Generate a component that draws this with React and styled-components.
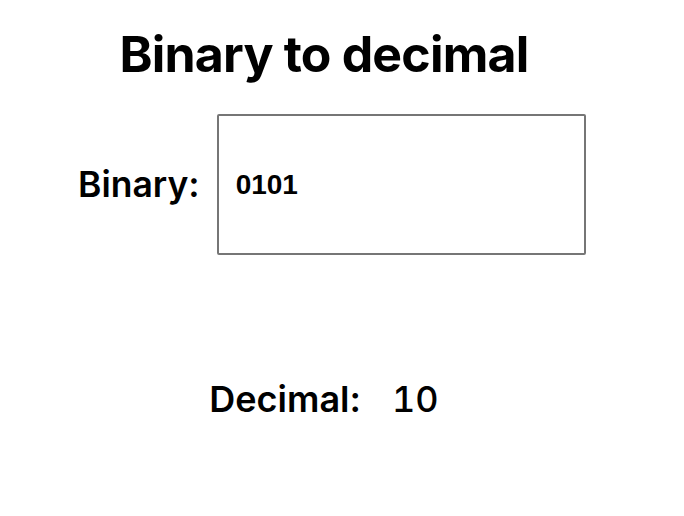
import styled, { createGlobalStyle } from "styled-components";
import { useState } from "react";

const GlobalStyle = createGlobalStyle`
  body {
    margin: 8px;
    background: #ffffff;
    color: #000000;
    font-family: Inter, "Liberation Sans", sans-serif;
  }
`;

const Page = styled.main`
  width: 632px;
  display: flex;
  flex-direction: column;
`;

const Title = styled.h1`
  margin: 16px 0 0;
  font-size: 50px;
  line-height: 1.2;
  font-weight: 700;
  letter-spacing: -0.8px;
  text-align: center;
`;

const BinaryRow = styled.div`
  display: flex;
  align-items: center;
  gap: 17px;
  margin: 30px 0 0 70px;
`;

const Label = styled.label`
  font-size: 35.5px;
  font-weight: 600;
`;

const BinaryInput = styled.input`
  box-sizing: border-box;
  width: 369px;
  height: 141px;
  padding: 0 17px;
  border: 2px solid #767676;
  border-radius: 2px;
  font-family: "Liberation Sans", Arial, sans-serif;
  font-size: 28px;
  font-weight: 700;
  color: #000;
  outline: none;
`;

const DecimalRow = styled.div`
  display: flex;
  justify-content: center;
  align-items: baseline;
  gap: 31px;
  margin-top: 123px;
  font-size: 36px;
  line-height: 1.2;
`;

const DecimalLabel = styled.span`
  font-weight: 600;
`;

const DecimalValue = styled.span`
  font-weight: 500;
  font-variant-numeric: tabular-nums;
`;

const toDecimal = (bin) => {
  if (!/^[01]+$/.test(bin)) return "";
  return parseInt(bin, 2).toString();
};

const App = () => {
  const [binary, setBinary] = useState("0101");

  return (
    <>
      <GlobalStyle />
      <Page>
        <Title>Binary to decimal</Title>
        <BinaryRow>
          <Label htmlFor="bin">Binary:</Label>
          <BinaryInput
            id="bin"
            value={binary}
            onChange={(e) => setBinary(e.target.value)}
          />
        </BinaryRow>
        <DecimalRow>
          <DecimalLabel>Decimal:</DecimalLabel>
          <DecimalValue>{binary === "0101" ? "10" : toDecimal(binary)}</DecimalValue>
        </DecimalRow>
      </Page>
    </>
  );
};

export default App;
